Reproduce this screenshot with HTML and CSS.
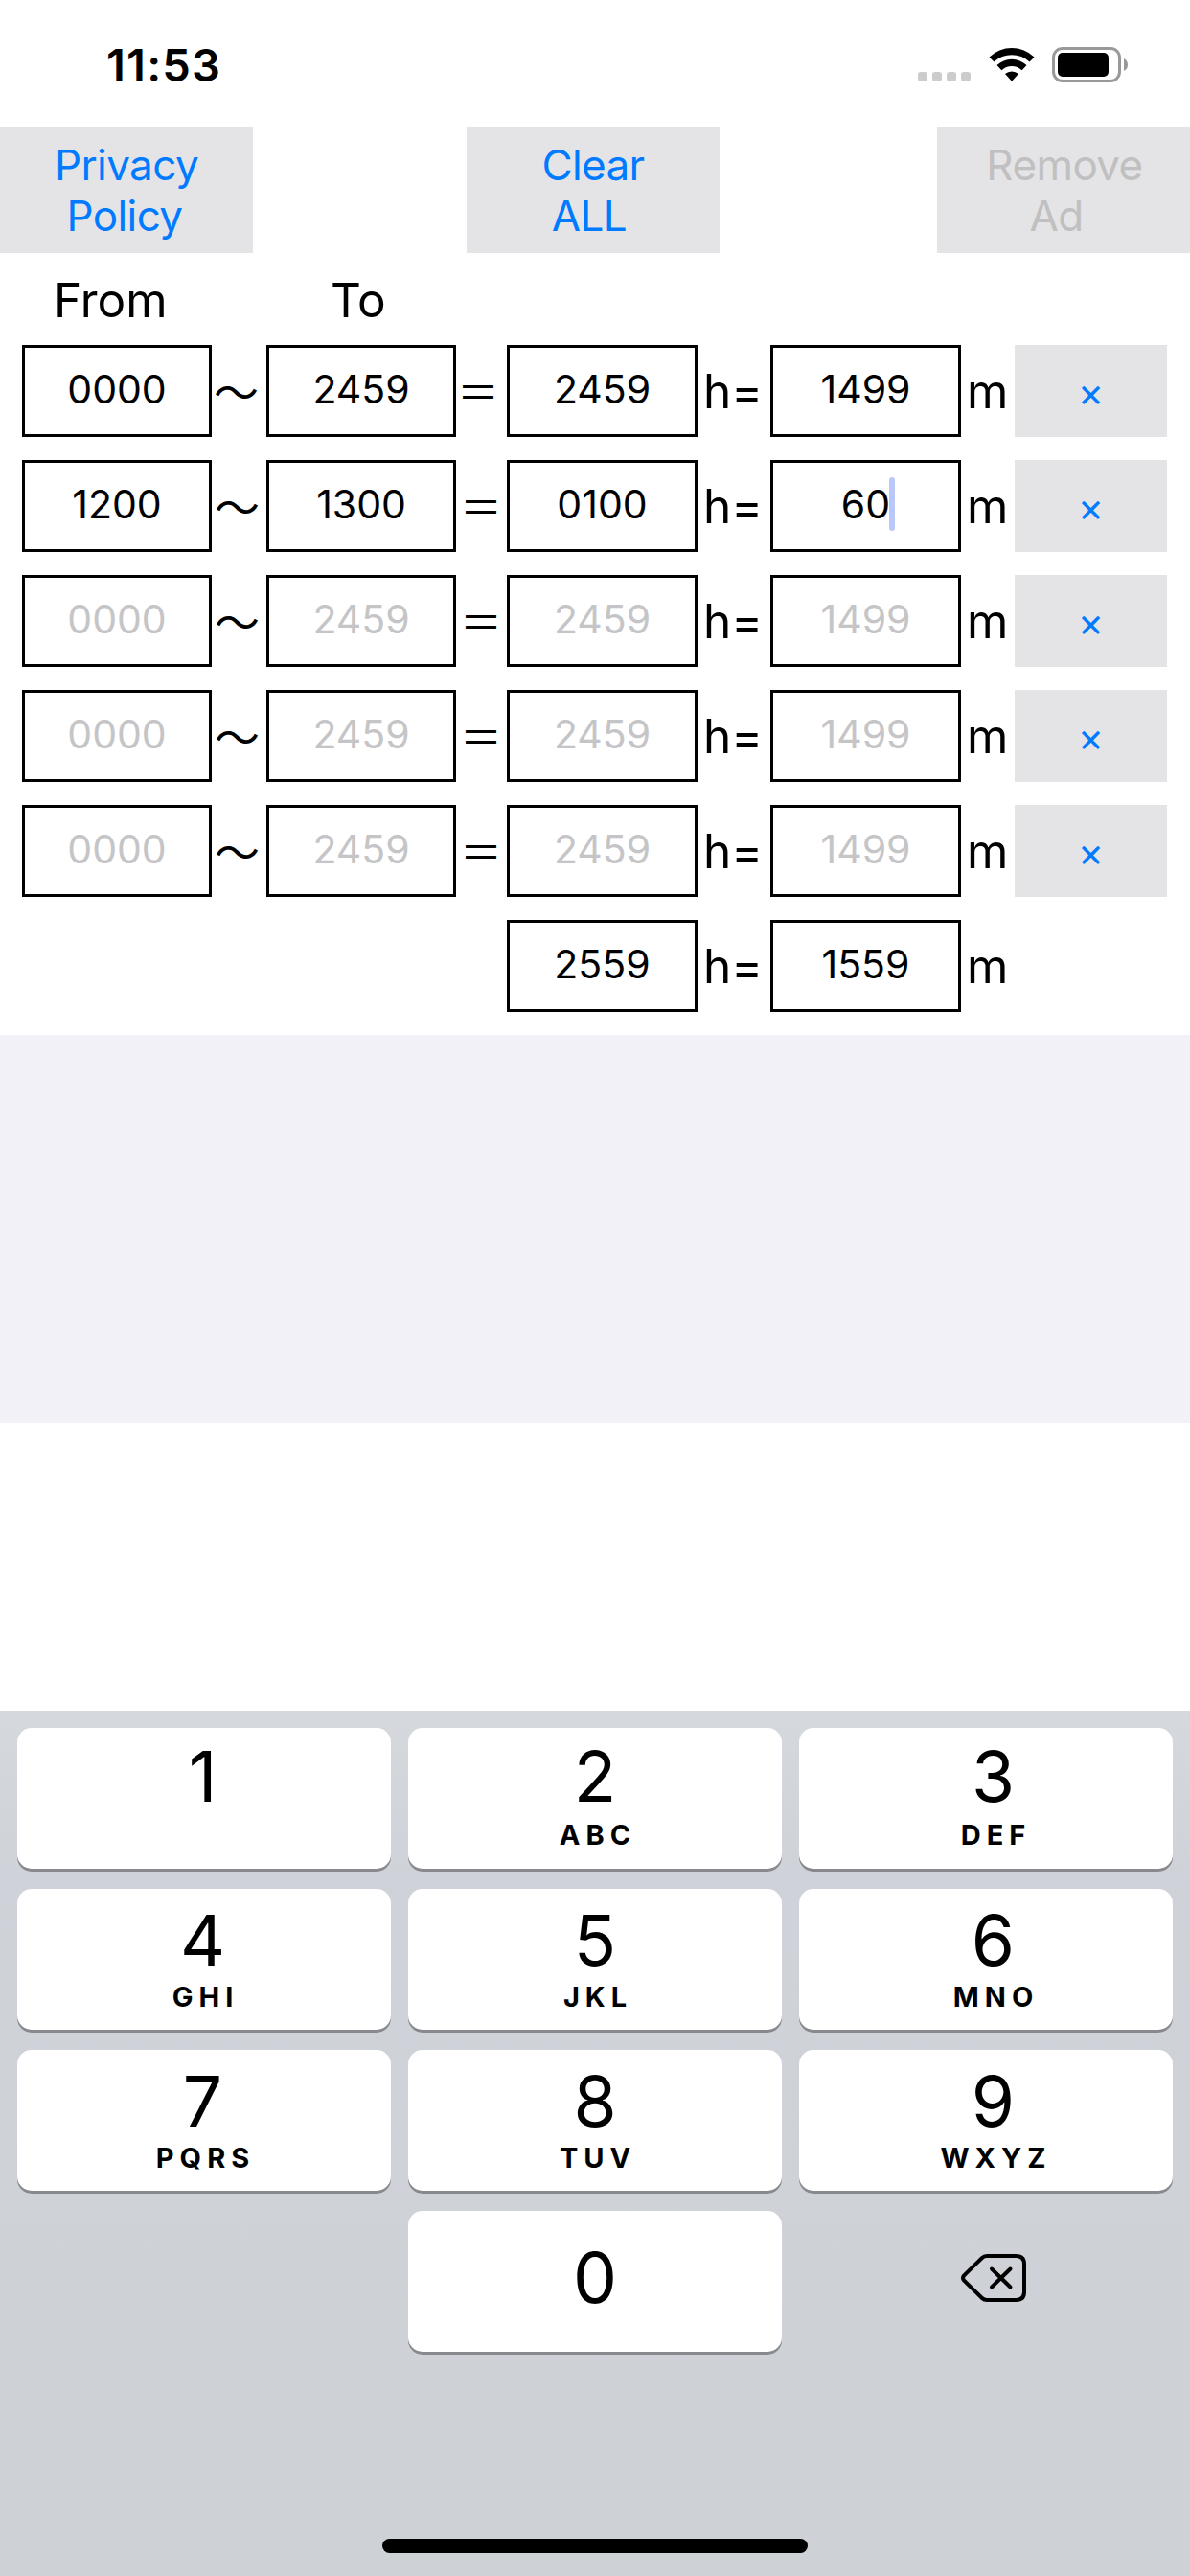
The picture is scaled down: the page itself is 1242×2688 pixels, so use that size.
FILE: index.html
```html
<!DOCTYPE html>
<html lang="en">
<head>
  <meta charset="UTF-8">
  <meta name="viewport" content="width=device-width, initial-scale=1.0">
  <title>Time Calculator</title>
  <link rel="stylesheet" href="styles.css">
</head>
<body>
  <div class="status-bar">
    <div class="clock">11:53</div>
    <div class="status-icons">
      <div class="signal"><i></i><i></i><i></i><i></i></div>
      <svg class="wifi" width="48" height="36" viewBox="0 0 48 36">
        <path d="M0.5 10.5 A34 34 0 0 1 47.5 10.5 L42.6 15.6 A27 27 0 0 0 5.4 15.6 Z"/>
        <path d="M8.5 19 A22.5 22.5 0 0 1 39.5 19 L34.6 24.2 A15.3 15.3 0 0 0 13.4 24.2 Z"/>
        <path d="M17 28 A11 11 0 0 1 31 28 L24 35.8 Z"/>
      </svg>
      <svg class="battery" width="80" height="37" viewBox="0 0 80 37">
        <rect x="1.5" y="1.5" width="69" height="34" rx="9.5" fill="none" stroke="#999" stroke-width="3"/>
        <rect x="6" y="6" width="53" height="25" rx="5"/>
        <path d="M75 12 Q79 14 79 18.5 Q79 23 75 25 Z" fill="#999"/>
      </svg>
    </div>
  </div>

  <div class="toolbar">
    <button class="tool-btn">Privacy<br><span class="line2 policy">Policy</span></button>
    <button class="tool-btn">Clear<br><span class="line2 all">ALL</span></button>
    <button class="tool-btn" disabled>Remove<br><span class="line2 ad">Ad</span></button>
  </div>

  <div class="labels">
    <div class="label-from">From</div>
    <div class="label-to">To</div>
  </div>

  <div class="rows">
    <div class="row first">
      <div class="field">0000</div>
      <div class="sign tilde">～</div>
      <div class="field">2459</div>
      <div class="sign equal">＝</div>
      <div class="field">2459</div>
      <div class="unit">h=</div>
      <div class="field">1499</div>
      <div class="unit">m</div>
      <button class="delete">×</button>
    </div>
    <div class="row">
      <div class="field">1200</div>
      <div class="sign tilde">～</div>
      <div class="field">1300</div>
      <div class="sign equal">＝</div>
      <div class="field">0100</div>
      <div class="unit">h=</div>
      <div class="field">60<span class="caret"></span></div>
      <div class="unit">m</div>
      <button class="delete">×</button>
    </div>
    <div class="row">
      <div class="field empty">0000</div>
      <div class="sign tilde">～</div>
      <div class="field empty">2459</div>
      <div class="sign equal">＝</div>
      <div class="field empty">2459</div>
      <div class="unit">h=</div>
      <div class="field empty">1499</div>
      <div class="unit">m</div>
      <button class="delete">×</button>
    </div>
    <div class="row">
      <div class="field empty">0000</div>
      <div class="sign tilde">～</div>
      <div class="field empty">2459</div>
      <div class="sign equal">＝</div>
      <div class="field empty">2459</div>
      <div class="unit">h=</div>
      <div class="field empty">1499</div>
      <div class="unit">m</div>
      <button class="delete">×</button>
    </div>
    <div class="row">
      <div class="field empty">0000</div>
      <div class="sign tilde">～</div>
      <div class="field empty">2459</div>
      <div class="sign equal">＝</div>
      <div class="field empty">2459</div>
      <div class="unit">h=</div>
      <div class="field empty">1499</div>
      <div class="unit">m</div>
      <button class="delete">×</button>
    </div>
    <!-- totals -->
    <div class="row total">
      <div class="field">2559</div>
      <div class="unit">h=</div>
      <div class="field">1559</div>
      <div class="unit">m</div>
    </div>
  </div>

  <div class="filler"></div>
  <div class="ad-space"></div>

  <div class="keyboard">
    <div class="keys">
      <div class="key top"><b>1</b></div>
      <div class="key top"><b>2</b><small>ABC</small></div>
      <div class="key top"><b>3</b><small>DEF</small></div>
      <div class="key"><b>4</b><small>GHI</small></div>
      <div class="key"><b>5</b><small>JKL</small></div>
      <div class="key"><b>6</b><small>MNO</small></div>
      <div class="key"><b>7</b><small>PQRS</small></div>
      <div class="key"><b>8</b><small>TUV</small></div>
      <div class="key"><b>9</b><small>WXYZ</small></div>
      <div></div>
      <div class="key zero"><b>0</b></div>
      <div class="backspace">
        <svg width="68" height="50" viewBox="0 0 68 50">
          <path d="M27 2 H57.5 Q66 2 66 10.5 V39.5 Q66 48 57.5 48 H27 Q24 48 22 46 L3 27.5 Q1 25 3 22.5 L22 4 Q24 2 27 2 Z"/>
          <path d="M32 15.500 L51.500 34.500 M51.500 15.500 L32 34.500"/>
        </svg>
      </div>
    </div>
    <div class="home-bar"></div>
  </div>
</body>
</html>
```
FILE: styles.css
```css
* {
  box-sizing: border-box;
}

body {
  margin: 0;
  width: 1242px;
  height: 2688px;
  overflow: hidden;
  background: #fff;
  color: #000;
  font-family: Inter, "Liberation Sans", sans-serif;
  display: flex;
  flex-direction: column;
}

button {
  border: none;
  padding: 0;
  margin: 0;
  background: #e4e4e6;
  color: #007aff;
  font-family: inherit;
}

.status-bar {
  height: 132px;
  display: flex;
  justify-content: space-between;
  padding: 49px 64px 0 111px;
}

.clock {
  font-size: 47px;
  font-weight: 600;
  line-height: 38px;
  letter-spacing: 1.2px;
}

.status-icons {
  display: flex;
  align-items: flex-start;
}

.signal {
  display: flex;
  gap: 5px;
  margin: 26px 19px 0 0;
}

.signal i {
  width: 10px;
  height: 10px;
  border-radius: 3px;
  background: #ccc;
}

.battery {
  margin-left: 18px;
}

.toolbar {
  display: grid;
  grid-template-columns: 487px 491px 264px;
  height: 132px;
}

.tool-btn {
  width: 264px;
  height: 132px;
  padding-top: 1px;
  font-size: 44px;
  line-height: 53px;
  letter-spacing: -0.6px;
}

.tool-btn:disabled {
  color: #c0c0c1;
  padding-left: 2px;
}

.line2 {
  padding-right: 4px;
}

.all {
  padding-right: 8px;
}

.ad {
  padding-right: 17px;
}

.labels {
  display: flex;
  height: 96px;
  font-size: 49.5px;
  line-height: 98px;
}

.label-from {
  width: 345px;
  padding-left: 56px;
}

.rows {
  height: 720px;
  padding-left: 23px;
  display: flex;
  flex-direction: column;
  gap: 24px;
}

.row {
  height: 96px;
  display: grid;
  grid-template-columns: 198px 57px 198px 53px 199px 76px 199px 56px 159px;
  grid-template-rows: 96px;
}

.total {
  padding-left: 506px;
  grid-template-columns: 199px 76px 199px 56px;
}

.field {
  border: 3px solid #000;
  font-size: 41px;
  line-height: 86px;
  text-align: center;
  position: relative;
}

.empty {
  color: #c5c5c7;
}

.caret {
  position: absolute;
  left: 121px;
  top: 15px;
  width: 6px;
  height: 56px;
  border-radius: 3px;
  background: #b9c8f8;
}

.sign {
  font-family: "Noto Sans CJK JP", sans-serif;
  font-size: 47px;
  line-height: 94px;
  padding-left: 3px;
}

.equal {
  font-size: 44px;
  padding-left: 4px;
}

.first .tilde {
  padding-left: 2px;
}

.first .equal {
  padding-left: 1px;
}

.unit {
  font-size: 49.5px;
  line-height: 97px;
  padding-left: 6px;
}

.delete {
  font-size: 42px;
  line-height: 95px;
}

.filler {
  height: 405px;
  background: #f2f1f7;
}

.ad-space {
  height: 300px;
}

.keyboard {
  flex: 1;
  padding-top: 18px;
  background: linear-gradient(#d5d8dd, #cfd2d8 170px, #ced1d6);
}

.keys {
  display: grid;
  grid-template-columns: repeat(3, 390px);
  grid-auto-rows: 147px;
  gap: 21px 18px;
  justify-content: center;
}

.key {
  background: #fff;
  border-radius: 15px;
  box-shadow: 0 3px 0 #88898d;
  display: flex;
  flex-direction: column;
  align-items: center;
  padding-top: 27px;
}

.key:nth-child(3n) {
  padding-left: 15px;
}

.key:nth-child(3n+1) {
  padding-right: 3px;
}

.key b {
  font-size: 73px;
  font-weight: 400;
  line-height: 53px;
}

.key small {
  font-size: 29px;
  font-weight: 700;
  line-height: 21px;
  letter-spacing: 6px;
  margin: 22px -6px 0 0;
}

.key.top {
  padding-top: 24px;
}

.top small {
  margin-top: 24px;
}

.key.zero {
  padding-top: 43px;
}

.backspace {
  padding: 45px 0 0 169px;
}

.backspace path {
  fill: none;
  stroke: #000;
  stroke-width: 4;
  stroke-linecap: round;
}

.home-bar {
  width: 444px;
  height: 15px;
  border-radius: 8px;
  background: #000;
  margin: 195px auto 0;
}
```
